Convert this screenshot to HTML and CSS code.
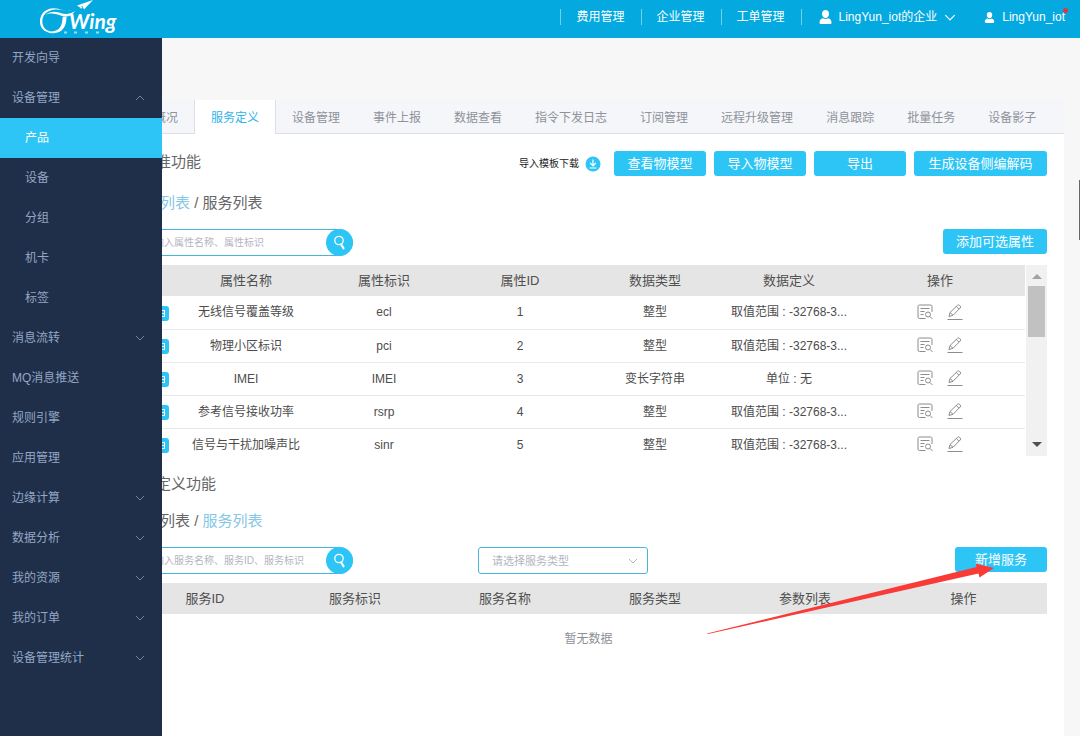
FILE: index.html
```html
<!DOCTYPE html>
<html lang="zh-CN">
<head>
<meta charset="utf-8">
<title>CTWing</title>
<link rel="stylesheet" href="styles.css">
</head>
<body>
<svg class="defs" width="0" height="0" aria-hidden="true">
  <symbol id="down" viewBox="0 0 10 6"><path d="M1 1l4 4 4-4" fill="none" stroke="currentColor"/></symbol>
  <symbol id="up" viewBox="0 0 10 6"><path d="M1 5l4-4 4 4" fill="none" stroke="currentColor"/></symbol>
  <symbol id="user" viewBox="0 0 12 14"><path d="M6 0C8.100 0 9.500 1.500 9.500 3.700 9.500 6 8 8 6 8S2.500 6 2.500 3.700C2.500 1.500 3.900 0 6 0zM3.500 8.200C4.800 9.300 7.200 9.300 8.500 8.200 10.800 8.800 12 10 12 12.500 12 13.500 11.500 14 10.500 14h-9C.5 14 0 13.500 0 12.500 0 10 1.200 8.800 3.500 8.200z" fill="currentColor"/></symbol>
  <symbol id="search" viewBox="0 0 14 16"><circle cx="6" cy="5.500" r="4.200" fill="none" stroke="currentColor" stroke-width="1.300"/><path d="M8.200 9.500l2.300 3.800" stroke="currentColor" stroke-width="2.200" stroke-linecap="round"/></symbol>
  <symbol id="detail" viewBox="0 0 16 16"><path d="M8.500 14.500H2.500a1.500 1.500 0 0 1-1.500-1.500V2.500A1.500 1.500 0 0 1 2.500 1h11A1.500 1.500 0 0 1 15 2.500V8M3.500 4.500h9M3.500 7.500h4M3.500 10.500h3M13 12.500l2.500 2.500" fill="none" stroke="currentColor"/><circle cx="11" cy="10.500" r="2.500" fill="none" stroke="currentColor"/></symbol>
  <symbol id="edit" viewBox="0 0 16 16"><path d="M2 12.500l1-4L10.500 1.300q1-.8 2 0l.7.7q.8 1 0 2L6 11.300zM9.300 2.500l2.700 2.700M3 8.500L6 11.300M.5 15.500h15" fill="none" stroke="currentColor"/></symbol>
  <symbol id="doc" viewBox="0 0 16 15"><rect width="16" height="15" rx="3" fill="#2dc5f6"/><path d="M4 4.500h8M4 7.500h8M4 10.500h8M11.500 4v7" stroke="#fff" fill="none"/></symbol>
</svg>

<header class="topbar">
  <a class="logo" href="#" aria-label="Wing">
    <svg viewBox="0 0 80 36" width="80" height="36">
      <path d="M34 11C25 11.500 20 8.500 13 9.800 5 11.500 1.500 17 2.500 23.500 3.500 29.500 9 32.500 14.500 31 20 29.500 22 26 22.700 17L26.500 16.500C26.500 23 25 27.500 21.500 30.500 16 34.500 7 34 2.500 29-1.800 24-.5 15 5 11 12 6.500 17 8.500 23 10 27 11 31 11 34 11z" fill="#fff"/>
      <path d="M5 15C12 10 17 12 22 13.500 26 14.500 31 14 35 11 32 16 27 17.500 22 16 16 14 11 12 5 15z" fill="#fff"/>
      <path d="M37 5.500L53 0 44 9.500 42.500 6.300 39.500 7.200zM42.500 7l-1.500 2-1-2z" fill="#fff"/>
      <text class="logo-text" x="29" y="29">Wing</text>
      <path d="M24 32.500h3M34 32.500h3M45 32.500h3M56 32.500h3" stroke="#9adcf2" stroke-width="2"/>
    </svg>
  </a>
  <nav class="topnav">
    <a href="#">费用管理</a>
    <a href="#">企业管理</a>
    <a href="#">工单管理</a>
    <a class="company" href="#"><svg width="13" height="14"><use href="#user"/></svg>LingYun_iot的企业<svg width="12" height="7"><use href="#down"/></svg></a>
    <a class="account" href="#"><svg width="11" height="11"><use href="#user"/></svg>LingYun_iot<span class="dot"></span></a>
  </nav>
</header>

<div class="body">
  <nav class="sidebar">
    <a href="#">开发向导</a>
    <a href="#">设备管理<svg><use href="#up"/></svg></a>
    <a class="sub active" href="#">产品</a>
    <a class="sub" href="#">设备</a>
    <a class="sub" href="#">分组</a>
    <a class="sub" href="#">机卡</a>
    <a class="sub" href="#">标签</a>
    <a href="#">消息流转<svg><use href="#down"/></svg></a>
    <a href="#">MQ消息推送</a>
    <a href="#">规则引擎</a>
    <a href="#">应用管理</a>
    <a href="#">边缘计算<svg><use href="#down"/></svg></a>
    <a href="#">数据分析<svg><use href="#down"/></svg></a>
    <a href="#">我的资源<svg><use href="#down"/></svg></a>
    <a href="#">我的订单<svg><use href="#down"/></svg></a>
    <a href="#">设备管理统计<svg><use href="#down"/></svg></a>
  </nav>

  <main class="main">
    <div class="content">
      <nav class="tabs">
        <a href="#">产品概况</a>
        <a class="current" href="#">服务定义</a>
        <a href="#">设备管理</a>
        <a href="#">事件上报</a>
        <a href="#">数据查看</a>
        <a href="#">指令下发日志</a>
        <a href="#">订阅管理</a>
        <a href="#">远程升级管理</a>
        <a href="#">消息跟踪</a>
        <a href="#">批量任务</a>
        <a href="#">设备影子</a>
      </nav>
      <div class="panel">
        <section>
          <div class="head">
            <h2>标准功能</h2>
            <div class="actions">
              <a class="template" href="#">导入模板下载<svg viewBox="0 0 16 16" width="16" height="16"><circle cx="8" cy="8" r="7.500" fill="#2dc5f6"/><path d="M8 3.500v6M5.200 7L8 9.800 10.800 7M4.500 12h7" fill="none" stroke="#fff" stroke-width="1.200"/></svg></a>
              <button class="btn">查看物模型</button>
              <button class="btn">导入物模型</button>
              <button class="btn">导出</button>
              <button class="btn wide">生成设备侧编解码</button>
            </div>
          </div>
          <p class="crumb"><a class="on" href="#">属性列表</a> / <a href="#">服务列表</a></p>
          <div class="tools">
            <div class="search">
              <input type="text" aria-label="搜索属性" placeholder="请输入属性名称、属性标识">
              <button aria-label="搜索"><svg width="14" height="16"><use href="#search"/></svg></button>
            </div>
            <button class="btn medium">添加可选属性</button>
          </div>
          <div class="scroller">
            <div class="viewport">
              <table class="grid props">
                <colgroup><col class="c1"><col class="c2"><col class="c3"><col class="c4"><col class="c5"><col class="c6"><col class="c7"></colgroup>
                <thead><tr><th></th><th>属性名称</th><th>属性标识</th><th>属性ID</th><th>数据类型</th><th>数据定义</th><th>操作</th></tr></thead>
                <tbody>
                  <tr><td><svg class="doc"><use href="#doc"/></svg></td><td>无线信号覆盖等级</td><td>ecl</td><td>1</td><td>整型</td><td>取值范围 : -32768-3...</td><td><button aria-label="查看"><svg><use href="#detail"/></svg></button><button aria-label="编辑"><svg><use href="#edit"/></svg></button></td></tr>
                  <tr><td><svg class="doc"><use href="#doc"/></svg></td><td>物理小区标识</td><td>pci</td><td>2</td><td>整型</td><td>取值范围 : -32768-3...</td><td><button aria-label="查看"><svg><use href="#detail"/></svg></button><button aria-label="编辑"><svg><use href="#edit"/></svg></button></td></tr>
                  <tr><td><svg class="doc"><use href="#doc"/></svg></td><td>IMEI</td><td>IMEI</td><td>3</td><td>变长字符串</td><td>单位 : 无</td><td><button aria-label="查看"><svg><use href="#detail"/></svg></button><button aria-label="编辑"><svg><use href="#edit"/></svg></button></td></tr>
                  <tr><td><svg class="doc"><use href="#doc"/></svg></td><td>参考信号接收功率</td><td>rsrp</td><td>4</td><td>整型</td><td>取值范围 : -32768-3...</td><td><button aria-label="查看"><svg><use href="#detail"/></svg></button><button aria-label="编辑"><svg><use href="#edit"/></svg></button></td></tr>
                  <tr><td><svg class="doc"><use href="#doc"/></svg></td><td>信号与干扰加噪声比</td><td>sinr</td><td>5</td><td>整型</td><td>取值范围 : -32768-3...</td><td><button aria-label="查看"><svg><use href="#detail"/></svg></button><button aria-label="编辑"><svg><use href="#edit"/></svg></button></td></tr>
                </tbody>
              </table>
            </div>
            <div class="bar">
              <svg viewBox="0 0 10 5" width="10" height="5"><path d="M0 5l5-5 5 5z" fill="#a3a3a3"/></svg>
              <span class="thumb"></span>
              <svg class="end" viewBox="0 0 10 5" width="10" height="5"><path d="M0 0l5 5 5-5z" fill="#505050"/></svg>
            </div>
          </div>
        </section>

        <section class="custom">
          <div class="head"><h2>自定义功能</h2></div>
          <p class="crumb"><a href="#">属性列表</a> / <a class="on" href="#">服务列表</a></p>
          <div class="tools">
            <div class="search">
              <input type="text" aria-label="搜索服务" placeholder="请输入服务名称、服务ID、服务标识">
              <button aria-label="搜索"><svg width="14" height="16"><use href="#search"/></svg></button>
            </div>
            <div class="pick">
              <select aria-label="服务类型"><option>请选择服务类型</option></select>
              <svg width="10" height="6"><use href="#down"/></svg>
            </div>
            <div class="add">
              <button class="btn">新增服务</button>
              <svg class="pointer" viewBox="706 562 290 74" width="290" height="74"><path d="M707 633.500L976.700 567 975.700 563.500 994 568 979.500 577.500 978.500 573.500 708 634z" fill="#f93a37"/></svg>
            </div>
          </div>
          <table class="grid services">
            <colgroup><col><col><col><col><col><col class="last"></colgroup>
            <thead><tr><th>服务ID</th><th>服务标识</th><th>服务名称</th><th>服务类型</th><th>参数列表</th><th>操作</th></tr></thead>
            <tbody><tr><td class="empty" colspan="6">暂无数据</td></tr></tbody>
          </table>
        </section>
      </div>
    </div>
    <span class="pagebar"></span>
  </main>
</div>
</body>
</html>
```
FILE: styles.css
```css
* { box-sizing: border-box; }
body {
  margin: 0;
  min-height: 100vh;
  display: flex;
  flex-direction: column;
  background: #f8f7f8;
  color: #555;
  font: 400 12px/20px "Liberation Sans", "Noto Sans CJK SC", sans-serif;
}
a { color: inherit; text-decoration: none; }
button { border: 0; padding: 0; background: none; color: inherit; font: inherit; cursor: pointer; }
.defs { position: absolute; }

.topbar {
  display: flex;
  justify-content: space-between;
  height: 38px;
  padding: 0 15px 0 40px;
  background: #04a9df;
  color: #fff;
}
.logo svg { display: block; }
.logo-text { fill: #fff; font: italic 700 21px Lato, sans-serif; }
.topnav { display: flex; align-items: center; height: 34px; }
.topnav a { padding: 0 16px 0 15px; border-left: 1px solid #6fd0ee; line-height: 16px; white-space: nowrap; }
.topnav .company { display: flex; align-items: center; gap: 7px; padding: 0 30px 0 17px; }
.topnav .account { position: relative; display: flex; align-items: center; gap: 7px; padding: 0; border: 0; }
.topnav a:nth-child(-n+3) { padding: 0 16px 0 15px; }
.topnav .company { padding-right: 28px; }
.dot { position: absolute; top: -1px; right: -3px; width: 5px; height: 5px; border-radius: 50%; background: #e8333c; }

.body { display: flex; flex: 1; }
.sidebar { flex: none; width: 162px; background: #1f2f49; color: #94a6c4; }
.sidebar a { display: flex; align-items: center; justify-content: space-between; height: 40px; padding: 0 17px 0 12px; }
.sidebar .sub { padding-left: 25px; }
.sidebar .active { background: #2dc5f6; color: #fff; }
.sidebar svg { width: 10px; height: 6px; color: #72829d; }

.main { position: relative; flex: 1; min-width: 0; display: flex; overflow: hidden; padding: 62px 16px 0 0; }
.content { flex: 1; min-width: 0; display: flex; flex-direction: column; margin-left: -48px; }
.tabs { display: flex; height: 34px; background: #f4f6fa; border-bottom: 1px solid #dcdfe6; color: #8f9299; }
.tabs a { padding: 0 16px; border-right: 1px solid transparent; line-height: 36px; white-space: nowrap; }
.tabs .current { height: 34px; margin-left: -1px; border-left: 1px solid #dcdfe6; border-right-color: #dcdfe6; background: #fff; color: #2fb4ea; }

.panel { flex: 1; padding: 17px 17px 0 16px; background: #fff; }
.head { display: flex; justify-content: space-between; }
h2 { margin: 0 0 0 11px; font-size: 15px; font-weight: 400; line-height: 21px; color: #666; }
.actions { display: flex; align-items: center; gap: 8px; }
.template { display: flex; align-items: center; gap: 6px; margin-right: 5px; font-size: 10px; color: #222; }
.btn { height: 25px; min-width: 92px; border-radius: 3px; background: #2dc5f6; color: #fff; font-size: 13px; line-height: 25px; white-space: nowrap; }
.wide { min-width: 133px; }
.medium { min-width: 104px; }
.crumb { margin: 15px 0 0; font-size: 15px; line-height: 24px; color: #666; }
.crumb .on { color: #86c7e6; }
.tools { display: flex; align-items: flex-start; justify-content: space-between; margin-top: 14px; }

.search { display: flex; width: 223px; height: 27px; border: 1px solid #43b8dc; border-radius: 3px 14px 14px 3px; }
.search input { flex: 1; min-width: 0; border: 0; padding: 0 0 0 13px; outline: 0; background: none; color: #4a4a4a; font: inherit; font-size: 10px; }
.search input::placeholder { color: #b4b4c2; }
.search button { display: flex; align-items: center; justify-content: center; width: 27px; height: 27px; margin: -1px -1px 0 0; border-radius: 50%; background: #2dc5f6; color: #fff; }

.pick { position: relative; width: 170px; margin-left: 125px; margin-right: auto; color: #b4b4c2; }
.pick select { appearance: none; width: 100%; height: 27px; padding: 0 13px; border: 1px solid #43b8dc; border-radius: 3px; background: #fff; color: inherit; font: inherit; font-size: 11px; }
.pick svg { position: absolute; right: 10px; top: 11px; pointer-events: none; }
.add { position: relative; display: flex; }
.pointer { position: absolute; top: 15px; right: 51px; pointer-events: none; }

.grid { width: 100%; table-layout: fixed; border-collapse: collapse; text-align: center; }
.grid th { height: 31px; padding: 0; background: #e5e5e5; color: #505050; font-size: 13px; font-weight: 400; }
.grid td { height: 33px; padding: 0; white-space: nowrap; color: #4c4c4c; }
.props td { border-bottom: 1px solid #e9e9e9; }
.c1 { width: 47px; } .c2 { width: 138px; } .c3 { width: 138px; } .c4 { width: 134px; }
.c5 { width: 136px; } .c6 { width: 132px; } .c7 { width: 170px; }
.props td:first-child { text-align: right; padding-right: 8px; }
.props td svg { display: block; width: 16px; height: 16px; }
.props td .doc { display: inline-block; height: 15px; vertical-align: middle; }
.props td:last-child { padding-bottom: 3px; }
.props td button { margin: 0 7px; color: #8c8c8c; vertical-align: middle; }
.scroller { display: flex; gap: 1px; height: 191px; margin-top: 9px; }
.viewport { flex: 1; overflow: hidden; }
.bar { display: flex; flex-direction: column; align-items: center; width: 21px; padding: 9px 0; background: #f1f1f1; }
.thumb { width: 17px; height: 51px; margin-top: 7px; background: #c1c1c1; }
.end { margin-top: auto; }

.custom { margin-top: 17px; }
.services { margin-top: 9px; }
.services col { width: 150px; }
.services .last { width: 167px; }
.services .empty { height: 50px; color: #8d9097; }
.pagebar { position: absolute; right: 0; top: 142px; width: 1px; height: 60px; background: #666; }
```
